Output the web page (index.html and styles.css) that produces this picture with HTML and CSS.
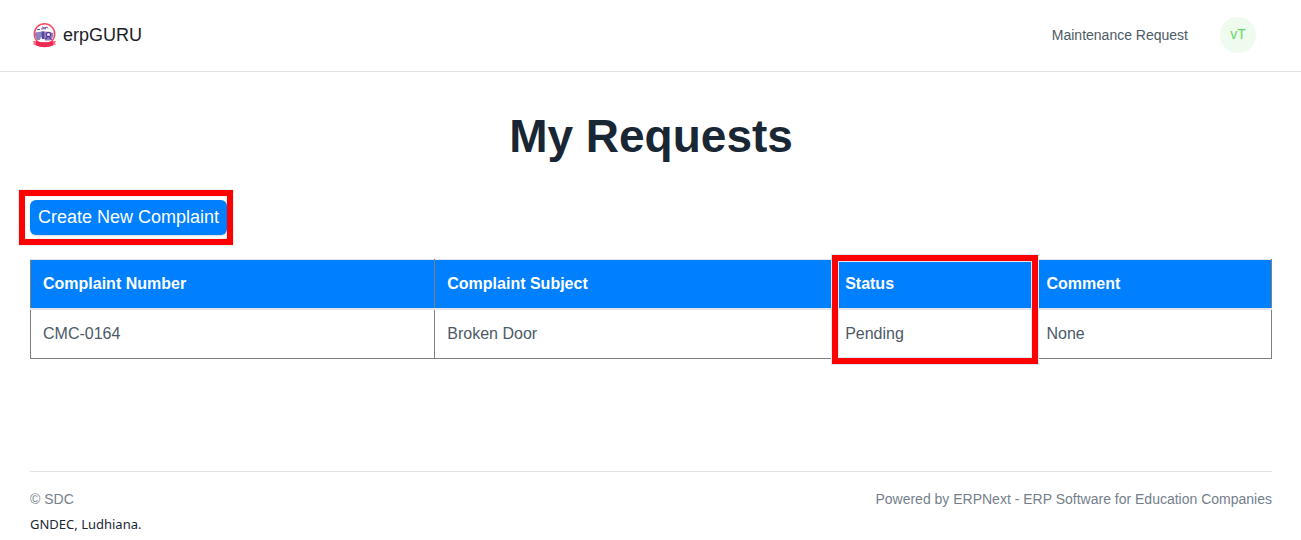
FILE: index.html
```html
<!DOCTYPE html>
<html lang="en">
<head>
<meta charset="utf-8">
<title>My Requests</title>
<link rel="stylesheet" href="styles.css">
</head>
<body>
<header class="navbar">
  <a class="brand" href="#">
    <svg class="logo" viewBox="0 0 25 25" aria-hidden="true">
      <circle cx="12.500" cy="11" r="10.200" fill="#fff" stroke="#fa4a66" stroke-width="1.500"/>
      <path d="M3 9.500l7-1h4l7.500 1.500-.5 4-3 3.500h-5l-1-3-3-.5-1 3H5l-2-4z" fill="#8f83bd"/>
      <path d="M5 6.500h3M10 3.800l2 1.200 3-1 1 1.500M9 5.800h5" stroke="#6a4da5" stroke-width="1" fill="none"/>
      <path d="M11 8.500v7.500" stroke="#51459a" stroke-width="2.500"/>
      <circle cx="16.500" cy="11.500" r="2.100" fill="#efeafa" stroke="#5b35a0" stroke-width="1.100"/>
      <path d="M17 13.500l2 2.800h1M16 13.500l-2.500 2.500" stroke="#5b35a0" stroke-width="1.100" fill="none"/>
      <path d="M3.500 18q9 2.500 18 0l.5 4q-9.500 4.500-19 0z" fill="#f4274d"/>
      <path d="M3.500 18l-3 .3 1.500 1.500-1 2 3-.3zM21.500 18l3 .3-1.500 1.500 1 2-3-.3z" fill="#f96d84"/>
      <path d="M5 20.800q7.500 2.200 15 0" stroke="#c04a8a" stroke-width=".8" fill="none" stroke-dasharray="1.500 1"/>
    </svg>
    <span>erpGURU</span>
  </a>
  <nav class="nav">
    <a class="nav-link" href="#">Maintenance Request</a>
    <button class="avatar" type="button" aria-label="Account">vT</button>
  </nav>
</header>
<main class="content">
  <h1 class="title">My Requests</h1>
  <div class="actions">
    <button class="create" type="button">Create New Complaint</button>
    <span class="mark mark-create"></span>
  </div>
  <table class="requests">
    <thead>
      <tr>
        <th scope="col">Complaint Number</th>
        <th scope="col">Complaint Subject</th>
        <th scope="col" class="status">Status<span class="mark mark-status"></span></th>
        <th scope="col">Comment</th>
      </tr>
    </thead>
    <tbody>
      <tr><td>CMC-0164</td><td>Broken Door</td><td>Pending</td><td>None</td></tr>
    </tbody>
  </table>
</main>
<footer class="footer">
  <div class="footer-row">
    <span>© SDC</span>
    <a class="powered" href="#">Powered by ERPNext - ERP Software for Education Companies</a>
  </div>
  <div class="place">GNDEC, Ludhiana.</div>
</footer>
</body>
</html>
```
FILE: styles.css
```css
* { box-sizing: border-box; }
body {
  margin: 0;
  background: #fff;
  color: #4c5a67;
  font-family: "Liberation Sans", Arial, sans-serif;
  font-size: 16px;
  line-height: 24px;
}
a { color: inherit; text-decoration: none; }
button { font-family: inherit; cursor: pointer; border: 0; }
.navbar {
  display: flex;
  align-items: center;
  justify-content: space-between;
  min-height: 72px;
  padding: 0 45px 2px 32px;
  border-bottom: 1px solid #e2e2e2;
}
.brand { display: flex; align-items: center; gap: 6px; color: #1c2126; font-size: 18px; }
.logo { width: 25px; height: 27px; padding-top: 2px; }
.nav { display: flex; align-items: center; gap: 32px; font-size: 14px; }
.avatar {
  width: 36px;
  height: 36px;
  padding: 0 0 2px;
  border-radius: 50%;
  background: #f0fbef;
  color: #61d861;
  font-size: 14px;
}
.content { padding: 36px 29px 0 30px; }
.title {
  margin: 0 0 36px;
  color: #192734;
  font-size: 46px;
  line-height: 56px;
  text-align: center;
}
.actions { position: relative; width: fit-content; margin-bottom: 24px; }
.create {
  display: block;
  padding: 5px 8px 6px;
  border-radius: 6px;
  background: #0080ff;
  box-shadow: 0 1px 2px rgba(0, 0, 0, .15);
  color: #fff;
  font-size: 18px;
  line-height: 24px;
}
.mark { position: absolute; border: 6px solid #f00; pointer-events: none; box-shadow: 0 0 1px rgba(0, 0, 0, .4), inset 0 0 1px rgba(0, 0, 0, .4); }
.mark-create { inset: -10px -6px -10px -11px; }
.requests { width: 100%; border-collapse: collapse; text-align: left; }
.requests th {
  padding: 12px;
  border: 1px solid #808080;
  border-top-color: #e2e6e9;
  border-bottom: 2px solid #e2e6e9;
  background: #0080ff;
  color: #fff;
}
.requests td { padding: 12px; border: 1px solid #808080; }
.requests .status { position: relative; }
.mark-status { top: -5px; left: -1px; width: calc(100% + 6px); height: 109px; box-shadow: 0 0 0 1px #dce7f2, inset 0 0 0 1px #dce7f2; }
.footer { margin: 112px 29px 0 30px; padding-top: 15px; border-top: 1px solid #e2e2e2; font-size: 14px; }
.footer-row { display: flex; justify-content: space-between; color: #74808b; }
.place { padding-top: 1px; color: #192734; font-family: "Noto Sans", sans-serif; font-size: 13px; }
```
